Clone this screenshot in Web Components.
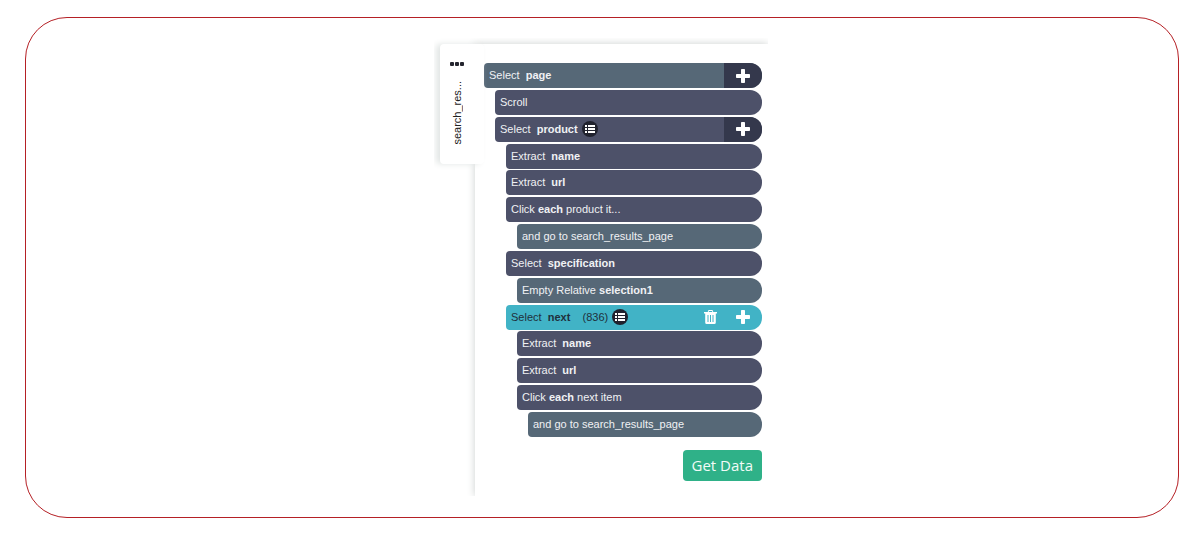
<!DOCTYPE html>
<html lang="en">
<head>
<meta charset="utf-8">
<title>Commands</title>
<style>
  body {
    margin: 0;
    background: #fff;
    font-family: "Liberation Sans", Arial, sans-serif;
    font-size: 11px;
  }
</style>
</head>
<body>
<page-frame>
  <template-tab slot="tab">search_res...</template-tab>
  <command-panel>
    <command-step kind="page" add>Select  <b>page</b></command-step>
    <command-step level="1">Scroll</command-step>
    <command-step level="1" list add>Select  <b>product</b></command-step>
    <command-step level="2">Extract  <b>name</b></command-step>
    <command-step level="2">Extract  <b>url</b></command-step>
    <command-step level="2">Click <b>each</b> product it...</command-step>
    <command-step level="3" kind="page">and go to search_results_page</command-step>
    <command-step level="2">Select  <b>specification</b></command-step>
    <command-step level="3" kind="page">Empty Relative <b>selection1</b></command-step>
    <command-step level="2" kind="active" list remove add>Select  <b>next</b>    (836)</command-step>
    <command-step level="3">Extract  <b>name</b></command-step>
    <command-step level="3">Extract  <b>url</b></command-step>
    <command-step level="3">Click <b>each</b> next item</command-step>
    <command-step level="4" kind="page">and go to search_results_page</command-step>
    <get-button slot="action">Get Data</get-button>
  </command-panel>
</page-frame>

<script>
function makeTemplate(html) {
  const template = document.createElement("template");
  template.innerHTML = html;
  return template;
}

const frameTemplate = makeTemplate(`
  <style>
    :host {
      display: flex;
      justify-content: center;
      margin: 17px 24px 16px 25px;
      padding: 20px 2px 21px 0;
      border: 1px solid #b52025;
      border-radius: 42px;
    }
    .workspace {
      display: flex;
      align-items: flex-start;
      padding: 6px 0 0 6px;
      overflow: hidden;
    }
  </style>
  <div class="workspace">
    <slot name="tab"></slot>
    <slot></slot>
  </div>
`);

const tabTemplate = makeTemplate(`
  <style>
    :host {
      display: flex;
      flex-direction: column;
      align-items: center;
      gap: 15px;
      box-sizing: border-box;
      width: 44px;
      height: 120px;
      margin-right: -9px;
      padding: 10px 10px 0 0;
      position: relative;
      z-index: 1;
      border-radius: 4px;
      background: #fff;
      box-shadow: -4px 0 6px #e2e6e5;
      color: #222;
    }
    button {
      display: flex;
      padding: 8px 4px 0;
      border: 0;
      background: none;
      cursor: pointer;
    }
    .name {
      writing-mode: vertical-rl;
      transform: rotate(180deg);
      line-height: 14px;
    }
  </style>
  <button aria-label="Template menu">
    <svg width="14" height="4" viewBox="0 0 14 4" fill="#24252e">
      <rect width="4" height="4" rx="1"/>
      <rect x="5" width="4" height="4" rx="1"/>
      <rect x="10" width="4" height="4" rx="1"/>
    </svg>
  </button>
  <span class="name"><slot></slot></span>
`);

const panelTemplate = makeTemplate(`
  <style>
    :host {
      display: flex;
      flex-direction: column;
      align-items: flex-end;
      gap: 13px;
      box-sizing: border-box;
      width: 293px;
      padding: 19px 6px 15px 9px;
      background: #fff;
      box-shadow: 0 0 8px #ccd0cf;
    }
    .steps {
      display: grid;
      align-content: space-between;
      width: 100%;
      min-height: 374px;
    }
  </style>
  <div class="steps"><slot></slot></div>
  <slot name="action"></slot>
`);

const stepTemplate = makeTemplate(`
  <style>
    :host {
      display: flex;
      align-items: stretch;
      height: 25px;
      margin-left: calc(var(--level, 0) * 11px);
      border-radius: 4px 12px 12px 4px;
      overflow: hidden;
      background: #4d5169;
      color: #f0f1f4;
      line-height: 25px;
      white-space: pre;
    }
    :host([kind="page"]) {
      background: #566877;
    }
    :host([kind="active"]) {
      background: #41b3c6;
      color: #20303c;
    }
    .label {
      flex: 1;
      display: flex;
      align-items: center;
      gap: 4px;
      padding-left: 5px;
    }
    button {
      display: flex;
      align-items: center;
      justify-content: center;
      padding: 0;
      border: 0;
      background: none;
      color: #fff;
      cursor: pointer;
    }
    .list {
      width: 16px;
      height: 16px;
      border-radius: 50%;
      background: #20222e;
    }
    .add {
      width: 38px;
      background: #34384c;
    }
    .remove {
      width: 28px;
    }
    :host([kind="active"]) .add {
      background: none;
    }
    :host(:not([list])) .list,
    :host(:not([add])) .add,
    :host(:not([remove])) .remove {
      display: none;
    }
  </style>
  <div class="label">
    <span><slot></slot></span>
    <button class="list" aria-label="Show list">
      <svg width="10" height="8" viewBox="0 0 10 8" fill="currentColor">
        <path d="M0 0h2v2H0zM3 0h7v2H3zM0 3h2v2H0zM3 3h7v2H3zM0 6h2v2H0zM3 6h7v2H3z"/>
      </svg>
    </button>
  </div>
  <button class="remove" aria-label="Delete">
    <svg width="13" height="14" viewBox="0 0 13 14" fill="currentColor">
      <path fill-rule="evenodd" d="M4.500 0h4l.8 2H13v1.500h-1.200V12.500q0 1.500-1.500 1.500H2.700q-1.500 0-1.500-1.500V3.500H0V2h3.700zM5 1.100L4.700 2h3.600L8 1.100zM3.500 5v7h1V5zM6 5v7h1V5zM8.500 5v7h1V5z"/>
    </svg>
  </button>
  <button class="add" aria-label="Add command">
    <svg width="14" height="14" viewBox="0 0 14 14" fill="currentColor">
      <path d="M5.800 0h2.400q.8 0 .8.8V5h4.200q.8 0 .8.8v2.400q0 .8-.8.8H9v4.200q0 .8-.8.8H5.800q-.8 0-.8-.8V9H.8Q0 9 0 8.200V5.800Q0 5 .8 5H5V.8Q5 0 5.800 0z"/>
    </svg>
  </button>
`);

const getTemplate = makeTemplate(`
  <style>
    :host {
      display: block;
    }
    button {
      display: block;
      height: 31px;
      padding: 0 9px;
      border: 0;
      border-radius: 4px;
      background: #2fb188;
      color: #f2fbf7;
      font: 15px/31px "Open Sans", "Noto Sans", sans-serif;
      cursor: pointer;
    }
  </style>
  <button><slot></slot></button>
`);

class BaseElement extends HTMLElement {
  constructor(template) {
    super();
    this.attachShadow({ mode: "open" });
    this.shadowRoot.appendChild(template.content.cloneNode(true));
  }
}

class PageFrame extends BaseElement {
  constructor() {
    super(frameTemplate);
  }
}

class TemplateTab extends BaseElement {
  constructor() {
    super(tabTemplate);
  }
}

class CommandPanel extends BaseElement {
  constructor() {
    super(panelTemplate);
  }
}

class CommandStep extends BaseElement {
  constructor() {
    super(stepTemplate);
  }

  connectedCallback() {
    this.style.setProperty("--level", this.getAttribute("level") || 0);
    this.shadowRoot.querySelector(".remove").addEventListener("click", () => this.remove());
  }
}

class GetButton extends BaseElement {
  constructor() {
    super(getTemplate);
  }
}

window.customElements.define("page-frame", PageFrame);
window.customElements.define("template-tab", TemplateTab);
window.customElements.define("command-panel", CommandPanel);
window.customElements.define("command-step", CommandStep);
window.customElements.define("get-button", GetButton);
</script>
</body>
</html>
